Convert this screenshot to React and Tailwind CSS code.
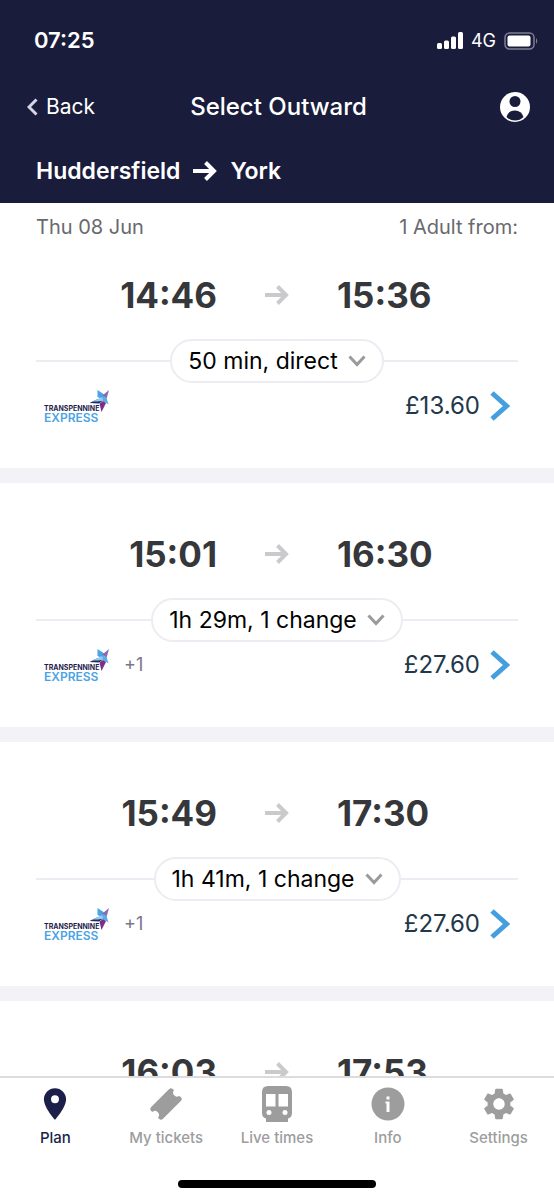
import React from "react";
import { MdPlace, MdSettings } from "react-icons/md";

const journeys = [
  { id: 1, depart: "14:46", arrive: "15:36", summary: "50 min, direct", price: "£13.60" },
  { id: 2, depart: "15:01", arrive: "16:30", summary: "1h 29m, 1 change", price: "£27.60", extra: "+1" },
  { id: 3, depart: "15:49", arrive: "17:30", summary: "1h 41m, 1 change", price: "£27.60", extra: "+1" },
  { id: 4, depart: "16:03", arrive: "17:53" },
];

const TicketIcon = () => (
  <svg width="34" height="34" viewBox="0 0 34 34" fill="currentColor">
    <path d="M20 2.200Q22 .2 24 2.200L25 3.200A3.900 3.900 0 0 0 30 9L31.800 10Q33.800 12 31.800 14L14 31.800Q12 33.800 10 31.800L9 30.500A3.900 3.900 0 0 0 3.500 25L2.200 24Q.2 22 2.200 20Z" />
  </svg>
);

const TrainIcon = () => (
  <svg width="30" height="36" viewBox="0 0 30 36">
    <path fill="currentColor" d="M6 0H24Q30 0 30 6V27Q30 31.500 26 32.500V36H4V32.500Q0 31.500 0 27V6Q0 0 6 0Z" />
    <path fill="#fff" d="M4 8H13.500V20.500H4ZM16.500 8H26V20.500H16.500Z" />
    <circle cx="7" cy="26.500" r="2.500" fill="#fff" />
    <circle cx="23" cy="26.500" r="2.500" fill="#fff" />
  </svg>
);

const InfoIcon = () => (
  <svg width="34" height="34" viewBox="0 0 34 34">
    <circle cx="17" cy="17" r="16.500" fill="currentColor" />
    <path fill="#fff" d="M15.500 9.500H18.500V12.500H15.500ZM14.500 14.500H18.500V25H15.500V16.500H14.500Z" />
  </svg>
);

const tabs = [
  { label: "Plan", icon: <MdPlace size={38} />, active: true },
  { label: "My tickets", icon: <TicketIcon /> },
  { label: "Live times", icon: <TrainIcon /> },
  { label: "Info", icon: <InfoIcon /> },
  { label: "Settings", icon: <MdSettings size={38} /> },
];

const ArrowIcon = ({ className }) => (
  <svg className={className} viewBox="0 0 24 20" fill="none" stroke="currentColor" strokeWidth="4">
    <path d="M0 10H21M12.500 1.500L21 10L12.500 18.500" />
  </svg>
);

const OperatorLogo = () => (
  <svg width="70" height="36" viewBox="0 0 70 36" role="img" aria-label="TransPennine Express">
    <text x="0" y="23" fontSize="7" fontWeight="700" fill="#1f1d4d">TRANSPENNINE</text>
    <text x="0" y="34" fontSize="12" fontWeight="600" fill="#4ba3e3">EXPRESS</text>
    {/* Star */}
    <path fill="#4ba3e3" d="M53.500 2L61 7L58 11L53.500 9Z" />
    <path fill="#8b6bb0" d="M65 2L62.500 11L58.500 7.500Z" />
    <path fill="#23285c" d="M45.500 15L54 11L59 12.500L55 15.500Z" />
    <path fill="#8fcdf2" d="M48.500 13.500L58 9L60 12.500L54 13.500Z" />
    <path fill="#55aee8" d="M58.500 8.500L62.500 10L64.500 16.500L59 13Z" />
    <path fill="#7b2f86" d="M55.500 15.500L59 13L62 15L57.500 24Z" />
  </svg>
);

const JourneyCard = ({ journey, first }) => (
  <li className={`border-b-[15px] border-[#f3f3f7] px-9 pb-[39px] ${first ? "pt-5" : "pt-[47px]"}`}>
    <div className="grid h-12 grid-cols-[1fr_120px_1fr] items-center text-[35px] leading-10 font-bold text-[#35373a]">
      <time className="text-right">{journey.depart}</time>
      <ArrowIcon className="mx-auto h-5 w-6 text-[#cacacc]" />
      <time>{journey.arrive}</time>
    </div>

    {journey.summary && (
      <div className="mt-5 flex items-center">
        <div className="h-0.5 flex-1 bg-[#ececf2]" />
        <button className="flex h-11 items-center gap-2.5 rounded-full border-2 border-[#ececf2] px-4 text-[23px] text-black">
          {journey.summary}
          <svg width="18" height="12" viewBox="0 0 18 12" fill="none" stroke="#9b9b9d" strokeWidth="3">
            <path d="M1.500 1.500L9 9.500L16.500 1.500" />
          </svg>
        </button>
        <div className="h-0.5 flex-1 bg-[#ececf2]" />
      </div>
    )}

    {journey.price && (
      <div className="flex h-[46px] items-center px-2">
        <OperatorLogo />
        <span className="ml-2.5 text-lg text-[#77778a]">{journey.extra}</span>
        <button className="ml-auto flex items-center gap-2.5 text-2xl text-[#22384a]">
          {journey.price}
          <svg width="20" height="30" viewBox="0 0 20 30" fill="none" stroke="#459fde" strokeWidth="5">
            <path d="M2 2L16.500 15L2 28" />
          </svg>
        </button>
      </div>
    )}
  </li>
);

const App = () => {
  return (
    <div className="flex h-screen flex-col overflow-hidden bg-white font-['Inter',sans-serif]">
      <header className="bg-[#1a1c3c] text-white">
        {/* Status bar */}
        <div className="flex h-[75px] items-center justify-between pt-1.5 pr-4 pl-[34px]">
          <span className="text-[22px] font-semibold">07:25</span>
          <div className="flex items-center gap-2">
            <svg width="26" height="17" viewBox="0 0 26 17" fill="currentColor">
              <rect x="0" y="11" width="5" height="6" rx="1.500" />
              <rect x="7" y="8.500" width="5" height="8.500" rx="1.500" />
              <rect x="14" y="4.500" width="5" height="12.500" rx="1.500" />
              <rect x="21" y="0" width="5" height="17" rx="1.500" />
            </svg>
            <span className="text-lg">4G</span>
            <svg width="34" height="18" viewBox="0 0 34 18">
              <rect x="1" y="1" width="29" height="16" rx="4.500" fill="none" stroke="#7e7f94" strokeWidth="1.500" />
              <rect x="3.500" y="3.500" width="23" height="11" rx="2" fill="#fff" />
              <path d="M32 6Q34.500 9 32 12Z" fill="#7e7f94" />
            </svg>
          </div>
        </div>

        <div className="grid h-16 grid-cols-[1fr_auto_1fr] items-center pr-6 pl-[27px]">
          <button className="flex items-center gap-2 text-[21px]">
            <svg width="11" height="18" viewBox="0 0 11 18" fill="none" stroke="#d6d6e4" strokeWidth="3">
              <path d="M9.500 1.500L2 9L9.500 16.500" />
            </svg>
            Back
          </button>
          <h1 className="text-2xl font-medium">Select Outward</h1>
          <button className="ml-auto" aria-label="Account">
            <svg width="30" height="30" viewBox="0 0 30 30">
              <circle cx="15" cy="15" r="15" fill="#fff" />
              <circle cx="15" cy="9.500" r="5.500" fill="#1a1c3c" />
              <path d="M6.500 25Q8.500 18.500 15 18.500Q21.500 18.500 23.500 25Q20 28.500 15 28.500Q10 28.500 6.500 25Z" fill="#1a1c3c" />
            </svg>
          </button>
        </div>

        <div className="flex h-16 items-center gap-[13px] px-9 text-[23px] font-semibold">
          <span>Huddersfield</span>
          <ArrowIcon className="h-5 w-6" />
          <span>York</span>
        </div>
      </header>

      <main className="min-h-0 flex-1 overflow-hidden">
        <div className="flex h-12 items-center justify-between px-9 text-xl text-[#68696e]">
          <span>Thu 08 Jun</span>
          <span>1 Adult from:</span>
        </div>
        <ul>
          {journeys.map((journey, index) => (
            <JourneyCard key={journey.id} journey={journey} first={index === 0} />
          ))}
        </ul>
      </main>

      <footer className="border-t-2 border-[#dcdcde] bg-white">
        <nav className="grid grid-cols-5 pt-1.5">
          {tabs.map((tab) => (
            <a
              key={tab.label}
              href="#"
              className={`flex flex-col items-center gap-1 text-[15px] leading-5 font-medium ${tab.active ? "text-[#1c1f4a]" : "text-[#9d9d9d]"}`}
            >
              <span className="flex h-10 items-center">{tab.icon}</span>
              {tab.label}
            </a>
          ))}
        </nav>
        {/* Home indicator */}
        <div className="mx-auto mt-8 mb-3 h-2 w-[198px] rounded-full bg-black" />
      </footer>
    </div>
  );
};

export default App;
